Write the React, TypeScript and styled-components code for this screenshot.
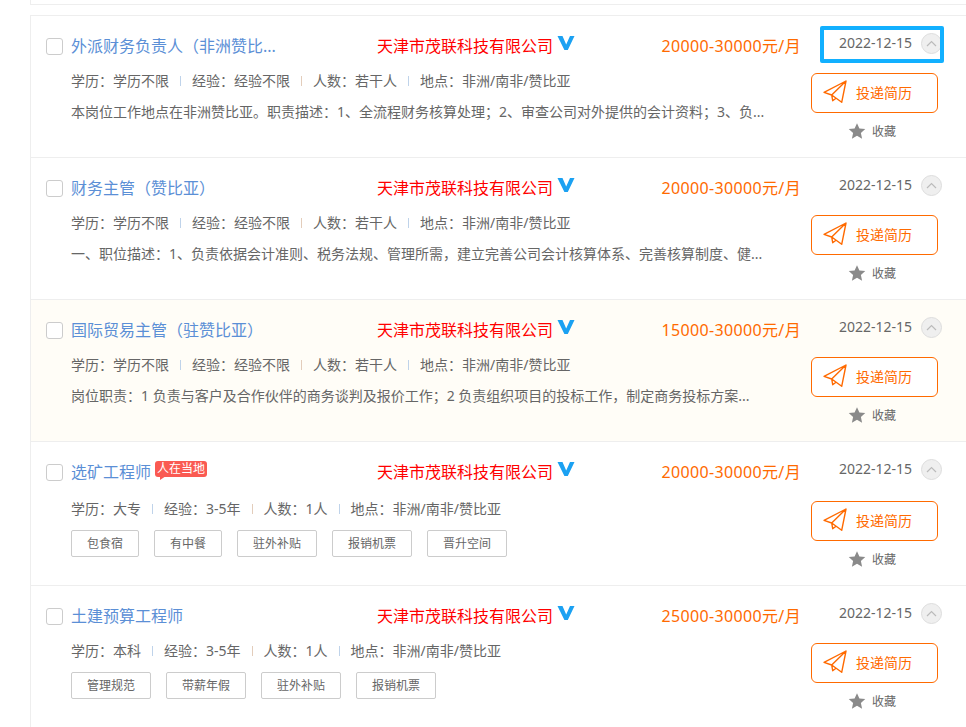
import React from "react"
import styled, { createGlobalStyle } from 'styled-components';

const GlobalStyle = createGlobalStyle`
  html, body {
    margin: 0;
    padding: 0;
    background: #fff;
    overflow: hidden;
  }
  body {
    font-family: "Noto Sans", "Noto Sans CJK SC", sans-serif;
    color: #666;
  }
`;

const Page = styled.div`
  width: 966px;
  height: 727px;
  overflow: hidden;
  padding-left: 30px;
  box-sizing: border-box;
`;

const ListStub = styled.div`
  height: 4px;
  border-left: 1px solid #eee;
  border-bottom: 1px solid #eee;
  margin-bottom: 10px;
`;

const Card = styled.div<{ $tinted?: boolean; $tall?: boolean }>`
  position: relative;
  display: flex;
  box-sizing: border-box;
  height: ${ props => props.$tall ? '144px' : '142px' };
  padding-left: 15px;
  border-top: 1px solid #eee;
  border-left: 1px solid #eee;
  background: ${ props => props.$tinted ? '#fffdf7' : '#fff' };
`;

const Main = styled.div`
  width: 755px;
`;

const TitleRow = styled.div`
  display: flex;
  align-items: center;
  height: 32px;
  margin-top: 14px;
`;

const CheckBox = styled.span`
  flex: none;
  box-sizing: border-box;
  width: 17px;
  height: 17px;
  margin-right: 8px;
  border: 1px solid #ccc;
  border-radius: 3px;
  background: #fff;
`;

const TitleCell = styled.div`
  display: flex;
  flex: none;
  align-items: center;
  width: 306px;
`;

const JobTitle = styled.a`
  white-space: nowrap;
  font-size: 16px;
  line-height: 24px;
  color: #5b8fd6;
`;

const LocalBadge = styled.span`
  position: relative;
  top: -3px;
  margin-left: 4px;
  padding: 0 2px;
  height: 16px;
  border-radius: 3px;
  background: #fa5a52;
  color: #fff;
  font-size: 12px;
  line-height: 15px;
  white-space: nowrap;

  &::after {
    content: "";
    position: absolute;
    left: 5px;
    top: 15px;
    border-top: 4px solid #fa5a52;
    border-right: 6px solid transparent;
  }
`;

const Company = styled.div`
  display: flex;
  flex: 1;
  align-items: center;
  margin-bottom: 3px;
  font-size: 16px;
  color: #f00;
  white-space: nowrap;
`;

const VerifiedMark = styled.svg`
  position: relative;
  top: -2px;
  width: 18px;
  height: 16px;
  margin-left: 4px;
`;

const Salary = styled.div`
  margin-bottom: 2px;
  font-size: 16px;
  letter-spacing: 0.35px;
  color: #ff6a00;
  white-space: nowrap;
`;

const MetaRow = styled.div<{ $tall?: boolean }>`
  display: flex;
  align-items: center;
  height: 20px;
  margin: ${ props => props.$tall ? '10px' : '8px' } 0 0 25px;
  font-size: 14px;
  color: #666;
  white-space: nowrap;
`;

const Sep = styled.i<{ $warm?: boolean }>`
  width: 1px;
  height: 10px;
  margin: 1px 11px 0;
  background: ${ props => props.$warm ? '#e3cdbb' : '#bfd3ea' };
`;

const Description = styled.div`
  margin: 12px 0 0 25px;
  white-space: nowrap;
  font-size: 14px;
  line-height: 20px;
  color: #666;
`;

const TagRow = styled.div`
  display: flex;
  gap: 15px;
  margin: 12px 0 0 25px;
`;

const Tag = styled.span`
  box-sizing: border-box;
  height: 27px;
  padding: 0 15px;
  border: 1px solid #ccc;
  border-radius: 2px;
  font-size: 12px;
  line-height: 26px;
  color: #666;
`;

const Side = styled.div`
  display: flex;
  flex-direction: column;
  align-items: flex-start;
  margin-left: 10px;
`;

const DateRow = styled.div`
  display: flex;
  align-items: center;
  height: 22px;
  margin: 15px 0 0 28px;
  font-size: 14px;
  color: #666;
`;

const FoldIcon = styled.span`
  display: flex;
  align-items: center;
  justify-content: center;
  box-sizing: border-box;
  width: 21px;
  height: 21px;
  margin: 2px 0 0 9px;
  border: 1px solid #ddd;
  border-radius: 50%;
  background: #efefef;
`;

const ApplyButton = styled.button<{ $tall?: boolean }>`
  display: flex;
  align-items: center;
  box-sizing: border-box;
  width: 127px;
  height: 40px;
  margin-top: ${ props => props.$tall ? '22px' : '20px' };
  padding: 0 0 2px 11px;
  border: 1px solid #ff6a00;
  border-radius: 6px;
  background: #fff;
  font-family: inherit;
  font-size: 14px;
  color: #ff6a00;
`;

const PlaneIcon = styled.svg`
  width: 24px;
  height: 24px;
  margin-right: 9px;
`;

const Favorite = styled.div`
  display: flex;
  align-items: center;
  height: 20px;
  margin: 8px 0 0 37px;
  font-size: 12px;
  color: #666;
`;

const StarIcon = styled.svg`
  width: 18px;
  height: 18px;
  margin-right: 6px;
`;

const Highlight = styled.div`
  position: absolute;
  left: 789px;
  top: 10px;
  box-sizing: border-box;
  width: 124px;
  height: 37px;
  border: 4px solid #12b0ff;
  border-radius: 2px;
`;

const jobs = [
  {
    title: '外派财务负责人（非洲赞比...',
    salary: '20000-30000元/月',
    meta: ['学历：学历不限', '经验：经验不限', '人数：若干人', '地点：非洲/南非/赞比亚'],
    desc: '本岗位工作地点在非洲赞比亚。职责描述：1、全流程财务核算处理；2、审查公司对外提供的会计资料；3、负...',
    highlight: true,
  },
  {
    title: '财务主管（赞比亚）',
    salary: '20000-30000元/月',
    meta: ['学历：学历不限', '经验：经验不限', '人数：若干人', '地点：非洲/南非/赞比亚'],
    desc: '一、职位描述：1、负责依据会计准则、税务法规、管理所需，建立完善公司会计核算体系、完善核算制度、健...',
  },
  {
    title: '国际贸易主管（驻赞比亚）',
    salary: '15000-30000元/月',
    meta: ['学历：学历不限', '经验：经验不限', '人数：若干人', '地点：非洲/南非/赞比亚'],
    desc: '岗位职责：1 负责与客户及合作伙伴的商务谈判及报价工作；2 负责组织项目的投标工作，制定商务投标方案...',
    tinted: true,
  },
  {
    title: '选矿工程师',
    salary: '20000-30000元/月',
    meta: ['学历：大专', '经验：3-5年', '人数：1人', '地点：非洲/南非/赞比亚'],
    tags: ['包食宿', '有中餐', '驻外补贴', '报销机票', '晋升空间'],
    local: true,
  },
  {
    title: '土建预算工程师',
    salary: '25000-30000元/月',
    meta: ['学历：本科', '经验：3-5年', '人数：1人', '地点：非洲/南非/赞比亚'],
    tags: ['管理规范', '带薪年假', '驻外补贴', '报销机票'],
  },
];

export default function App() {
  return (
    <Page>
      <GlobalStyle />
      <ListStub />
      { jobs.map( (job: any) => {
        const tall = !!job.local;
        return (
          <Card key={ job.title } $tinted={ job.tinted } $tall={ tall }>
            <Main>
              <TitleRow>
                <CheckBox />
                <TitleCell>
                  <JobTitle>{ job.title }</JobTitle>
                  { job.local && <LocalBadge>人在当地</LocalBadge> }
                </TitleCell>
                <Company>
                  天津市茂联科技有限公司
                  <VerifiedMark viewBox="0 0 18 16">
                    <path d="M0.5 1H5.5L9.2 9.5L13 1H17.5L10.8 15H7.4Z" fill="#1ba1f2" />
                  </VerifiedMark>
                </Company>
                <Salary>{ job.salary }</Salary>
              </TitleRow>
              <MetaRow $tall={ tall }>
                { job.meta.map( (item: string, i: number) => (
                  <React.Fragment key={ item }>
                    { i > 0 && <Sep $warm={ i === 2 } /> }
                    { item }
                  </React.Fragment>
                )) }
              </MetaRow>
              { job.desc && <Description>{ job.desc }</Description> }
              { job.tags && (
                <TagRow>
                  { job.tags.map( (tag: string) => <Tag key={ tag }>{ tag }</Tag> ) }
                </TagRow>
              ) }
            </Main>
            <Side>
              <DateRow>
                2022-12-15
                <FoldIcon>
                  <svg width="11" height="7" viewBox="0 0 11 7">
                    <path d="M1 6L5.5 1.5L10 6" fill="none" stroke="#bbb" strokeWidth="1.2" />
                  </svg>
                </FoldIcon>
              </DateRow>
              <ApplyButton $tall={ tall }>
                <PlaneIcon viewBox="0 0 24 24">
                  <path
                    d="M23 1L1 12.3L8.7 15L23 1L18.7 22.3L8.7 15L9.7 20.7L13 18.3"
                    fill="none"
                    stroke="#ff6a00"
                    strokeWidth="1.4"
                    strokeLinejoin="round"
                  />
                </PlaneIcon>
                投递简历
              </ApplyButton>
              <Favorite>
                <StarIcon viewBox="0 0 24 24">
                  <path d="M12 1.5L15.2 8.6L23 9.4L17.2 14.6L18.8 22.3L12 18.4L5.2 22.3L6.8 14.6L1 9.4L8.8 8.6Z" fill="#8a8a8a" />
                </StarIcon>
                收藏
              </Favorite>
            </Side>
            { job.highlight && <Highlight /> }
          </Card>
        );
      }) }
    </Page>
  );
}
